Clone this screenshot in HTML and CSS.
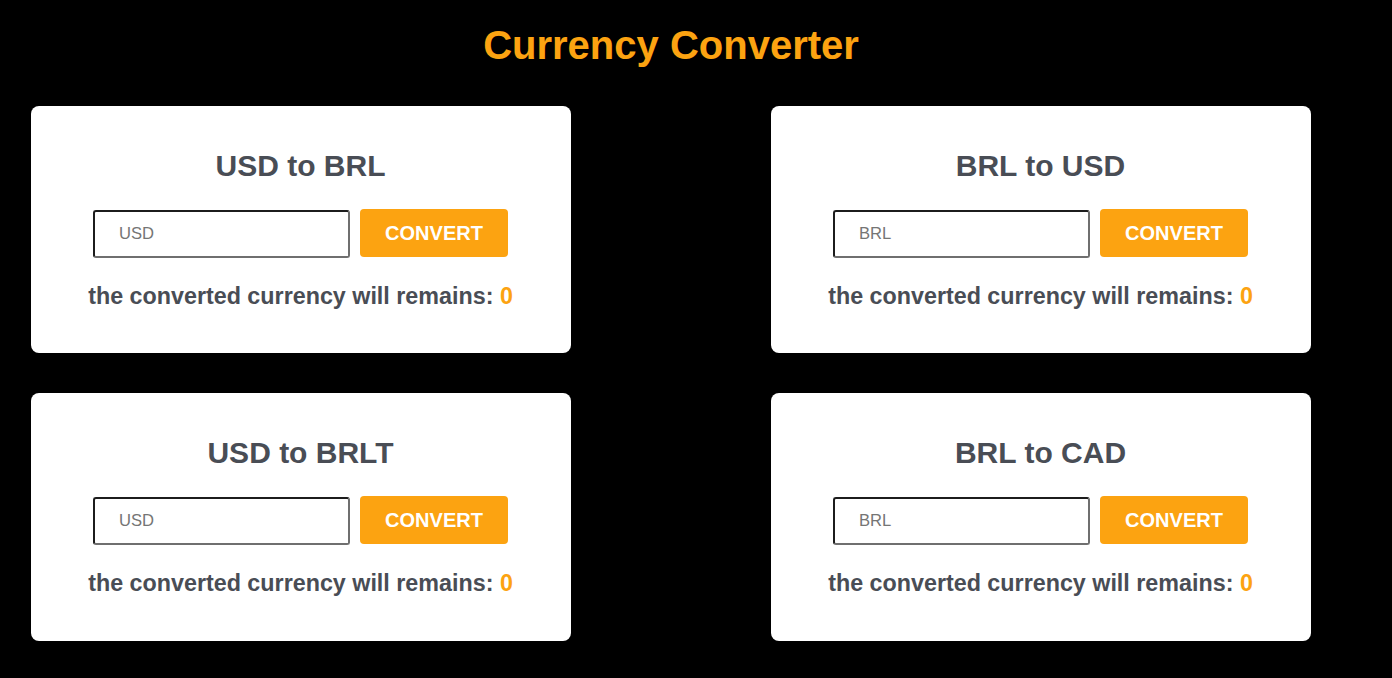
FILE: index.html
```html
<!DOCTYPE html>
<html lang="en">
<head>
<meta charset="utf-8">
<title>Currency Converter</title>
<link rel="stylesheet" href="styles.css">
</head>
<body>
<div class="page">
  <h1 class="page-title">Currency Converter</h1>
  <div class="grid">
    <div class="card">
      <h2 class="card-title">USD to BRL</h2>
      <div class="form-row">
        <input class="amount" type="text" placeholder="USD">
        <button class="convert">CONVERT</button>
      </div>
      <p class="result">the converted currency will remains: <span class="value">0</span></p>
    </div>
    <div class="card">
      <h2 class="card-title">BRL to USD</h2>
      <div class="form-row">
        <input class="amount" type="text" placeholder="BRL">
        <button class="convert">CONVERT</button>
      </div>
      <p class="result">the converted currency will remains: <span class="value">0</span></p>
    </div>
    <div class="card tall">
      <h2 class="card-title">USD to BRLT</h2>
      <div class="form-row">
        <input class="amount" type="text" placeholder="USD">
        <button class="convert">CONVERT</button>
      </div>
      <p class="result">the converted currency will remains: <span class="value">0</span></p>
    </div>
    <div class="card tall">
      <h2 class="card-title">BRL to CAD</h2>
      <div class="form-row">
        <input class="amount" type="text" placeholder="BRL">
        <button class="convert">CONVERT</button>
      </div>
      <p class="result">the converted currency will remains: <span class="value">0</span></p>
    </div>
  </div>
</div>
</body>
</html>
```
FILE: styles.css
```css
html, body {
  margin: 0;
  padding: 0;
  background: #000;
}
body {
  font-family: "Liberation Sans", Arial, sans-serif;
}
.page {
  width: 1342px;
  box-sizing: border-box;
  padding: 22px 31px 0;
}
.page-title {
  margin: 0 0 38px;
  font-size: 40px;
  line-height: 46px;
  font-weight: 700;
  color: #fca311;
  text-align: center;
}
.grid {
  display: grid;
  grid-template-columns: 540px 540px;
  column-gap: 200px;
  row-gap: 40px;
}
.card {
  background: #fff;
  border-radius: 8px;
  padding: 42px 1px 43px 0;
  display: flex;
  flex-direction: column;
  align-items: center;
}
.card.tall {
  padding-bottom: 44px;
}
.card-title {
  margin: 0;
  font-size: 30px;
  line-height: 36px;
  font-weight: 700;
  color: #494d55;
}
.form-row {
  margin-top: 25px;
  display: flex;
  align-items: flex-start;
  gap: 10px;
  height: 49px;
}
.amount {
  margin-top: 1px;
  width: 257px;
  height: 48px;
  box-sizing: border-box;
  border: 2px solid;
  border-color: #1c1c1c #6f6f6f #6f6f6f #1c1c1c;
  border-radius: 3px;
  padding: 0 8px 0 24px;
  font-family: "Liberation Sans", Arial, sans-serif;
  font-size: 16.6px;
  color: #222;
  background: #fff;
  outline: none;
}
.amount::placeholder {
  color: #757575;
}
.convert {
  width: 148px;
  height: 48px;
  border: none;
  border-radius: 4px;
  background: #fca311;
  color: #fff;
  font-family: "Liberation Sans", Arial, sans-serif;
  font-size: 20px;
  font-weight: 700;
  padding: 0;
  cursor: pointer;
}
.result {
  margin: 24px 0 0;
  font-size: 23.3px;
  line-height: 28px;
  font-weight: 700;
  color: #494d55;
  text-align: center;
}
.value {
  color: #fca311;
}
```
